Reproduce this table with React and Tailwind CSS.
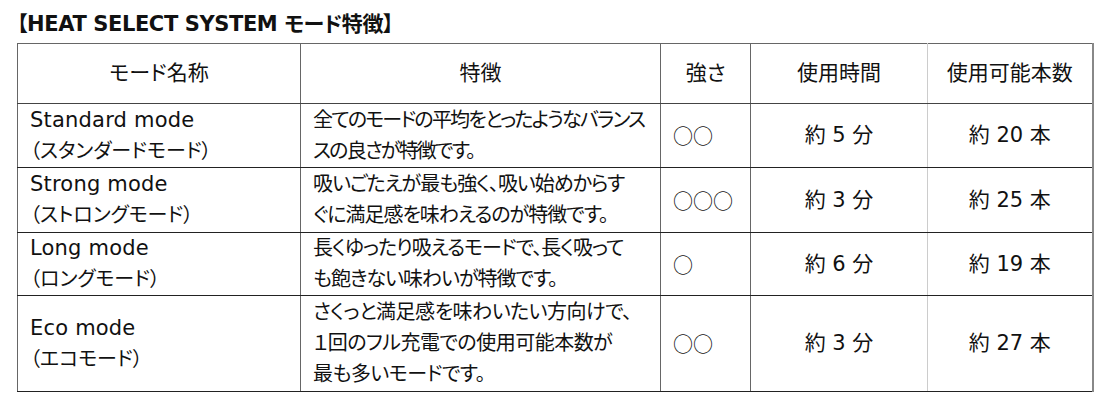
const rows = [
  {
    en: 'Standard mode',
    ja: '（スタンダードモード）',
    desc: ['全てのモードの平均をとったようなバランス', 'スの良さが特徴です。'],
    tight: 'tracking-[-1.8px]',
    power: '○○',
    time: '約 5 分',
    count: '約 20 本',
    h: 'h-[64px]',
  },
  {
    en: 'Strong mode',
    ja: '（ストロングモード）',
    desc: ['吸いごたえが最も強く、吸い始めからす', 'ぐに満足感を味わえるのが特徴です。'],
    tight: 'tracking-[-1px]',
    power: '○○○',
    time: '約 3 分',
    count: '約 25 本',
    h: 'h-[65px]',
  },
  {
    en: 'Long mode',
    ja: '（ロングモード）',
    desc: ['長くゆったり吸えるモードで、長く吸って', 'も飽きない味わいが特徴です。'],
    tight: 'tracking-[-1px]',
    power: '○',
    time: '約 6 分',
    count: '約 19 本',
    h: 'h-[63px]',
  },
  {
    en: 'Eco mode',
    ja: '（エコモード）',
    desc: ['さくっと満足感を味わいたい方向けで、', '１回のフル充電での使用可能本数が', '最も多いモードです。'],
    tight: 'tracking-[-0.5px]',
    power: '○○',
    time: '約 3 分',
    count: '約 27 本',
    h: 'h-[96px]',
  },
]

const App = () => {
  return (
    <div className="w-[1102px] h-[402px] bg-white text-[#111] font-['DejaVu_Sans','Noto_Sans_CJK_JP',sans-serif] [font-feature-settings:'palt']">
      <h1 className="pl-[17px] pt-[10px] h-[43px] text-[21px] font-bold leading-[28px] tracking-[-0.4px]">
        【HEAT SELECT SYSTEM モード特徴】
      </h1>

      <table className="ml-[17px] w-[1075px] border-collapse table-fixed text-[20px] leading-[31px]">
        <colgroup>
          <col className="w-[283px]" />
          <col className="w-[360px]" />
          <col className="w-[90px]" />
          <col className="w-[177px]" />
          <col className="w-[165px]" />
        </colgroup>
        <thead>
          <tr className="h-[60px] text-[21px]">
            <th className="font-normal text-center border border-[#666] border-b-[#444]">モード名称</th>
            <th className="font-normal text-center border border-[#666] border-b-[#444]">特徴</th>
            <th className="font-normal text-center border border-[#666] border-b-[#444]">強さ</th>
            <th className="font-normal text-center border border-[#666] border-b-[#444] border-r-[#ccc]">使用時間</th>
            <th className="font-normal text-center border border-[#666] border-b-[#444] border-r-2 border-r-[#888]">使用可能本数</th>
          </tr>
        </thead>
        <tbody>
          {rows.map((r) => (
            <tr key={r.en} className={r.h}>
              <td className="border border-[#666] border-b-[#222] pl-[12px] align-middle">
                <div className="text-[21px] tracking-[0.2px]">{r.en}</div>
                <div>{r.ja}</div>
              </td>
              <td className={`border border-[#666] border-b-[#222] pl-[12px] align-middle whitespace-nowrap ${r.tight}`}>
                {r.desc.map((line) => (
                  <div key={line}>{line}</div>
                ))}
              </td>
              <td className="border border-[#666] border-b-[#222] pl-[12px] align-middle font-['Noto_Sans_CJK_JP',sans-serif] text-[20px] [font-feature-settings:normal]">
                {r.power}
              </td>
              <td className="border border-[#666] border-b-[#222] border-r-[#ccc] text-center align-middle text-[21px]">{r.time}</td>
              <td className="border border-[#666] border-b-[#222] border-r-2 border-r-[#888] text-center align-middle text-[21px]">{r.count}</td>
            </tr>
          ))}
        </tbody>
      </table>
    </div>
  )
}

export default App
